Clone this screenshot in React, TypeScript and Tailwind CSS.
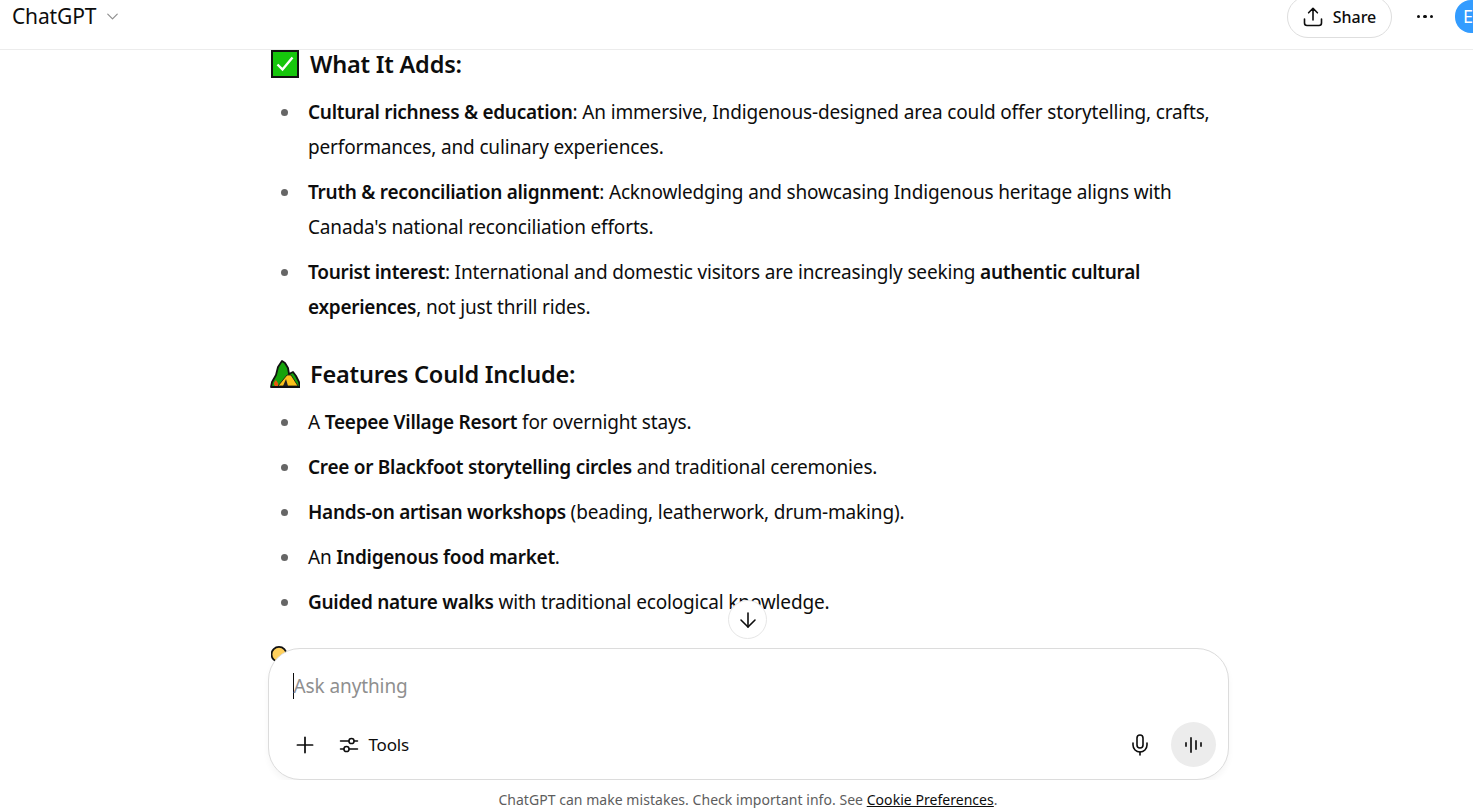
import { ArrowDown, ChevronDown, Mic, Plus } from "lucide-react";
import type { ReactNode } from "react";

const CheckEmoji = () => (
  <svg width="28" height="28" viewBox="0 0 28 28" className="shrink-0">
    <rect x="1" y="1" width="26" height="26" fill="#16c60c" stroke="#111" strokeWidth="2" />
    <path d="M6.5 14.5l5 5 10-12" fill="none" stroke="#fff" strokeWidth="2.4" />
  </svg>
);

const CampEmoji = () => (
  <svg width="30" height="28" viewBox="0 0 30 28" className="ml-[-1px] mr-[-1px] shrink-0">
    <path d="M1 27l1-5 4-7 2-8 4-6 3 2 3 5 1 6 4-2 3 4 3 6 1 5z" fill="#16a30c" stroke="#111" strokeWidth="1.8" strokeLinejoin="round" />
    <path d="M8 26l9-11h4l7 11z" fill="#fcc21b" stroke="#111" strokeWidth="0.8" strokeLinejoin="round" />
    <path d="M13 26l3-7 2 7z" fill="#222" />
    <path d="M5 26c-2-2-1-4 1-6 1 2 3 3 2 6z" fill="#e8590c" />
  </svg>
);

const BulbEmoji = () => (
  <svg width="28" height="28" viewBox="0 0 28 28" className="shrink-0">
    <circle cx="8" cy="8.4" r="7.5" fill="#ffd05c" stroke="#111" strokeWidth="1.8" />
  </svg>
);

const Heading = ({ icon, children, className }: { icon: ReactNode; children: ReactNode; className: string }) => (
  <h3 className={`flex items-center gap-[11px] h-[28px] text-[23.5px] tracking-[-0.2px] font-semibold ${className}`}>
    {icon}
    <span className="pt-[2px]">{children}</span>
  </h3>
);

const Item = ({ children }: { children: ReactNode }) => (
  <li className="relative before:absolute before:left-[-27px] before:top-[14px] before:h-[7px] before:w-[7px] before:rounded-full before:bg-[#666]">
    {children}
  </li>
);

const Bold = ({ children }: { children: ReactNode }) => <b className="font-semibold tracking-[-0.28px]">{children}</b>;

const listClass = "pl-[37px] mt-[16.5px] flex flex-col gap-[10px] text-[19px] leading-[35px] tracking-[-0.16px]";

export default function App() {
  return (
    <div className="h-[808px] w-[1473px] overflow-hidden bg-white text-[#0d0d0d] font-['Noto_Sans','Open_Sans',sans-serif]">
      <div className="relative flex h-full w-[1496px] flex-col">
        <header className="flex h-[50px] shrink-0 items-center justify-between border-b border-[#ececec] pb-[16px] pl-[12px] pr-[9px]">
          <div className="flex items-center gap-[7px]">
            <span className="text-[21px] tracking-[-0.15px]">ChatGPT</span>
            <ChevronDown size={19} strokeWidth={1.5} className="text-[#8f8f8f]" />
          </div>
          <div className="flex items-center">
            <button className="flex h-[42px] w-[105px] items-center justify-center gap-[10px] rounded-full border border-[#dedede] text-[16px] font-medium">
              <svg width="20" height="21" viewBox="0 0 20 21" fill="none" stroke="#0d0d0d" strokeWidth="1.6" strokeLinecap="round" strokeLinejoin="round">
                <path d="M10 14V2.5M5.6 6.8L10 2.3l4.4 4.5M1.5 13v4a2.5 2.5 0 0 0 2.5 2.5h12a2.5 2.5 0 0 0 2.5-2.5v-4" />
              </svg>
              Share
            </button>
            <div className="ml-[23px] flex w-[20px] justify-center gap-[3px]">
              <i className="h-[3.5px] w-[3.5px] rounded-full bg-[#0d0d0d]" />
              <i className="h-[3.5px] w-[3.5px] rounded-full bg-[#0d0d0d]" />
              <i className="h-[3.5px] w-[3.5px] rounded-full bg-[#0d0d0d]" />
            </div>
            <div className="ml-[20px] flex h-[33px] w-[32px] items-center rounded-full bg-[#339cff] pl-[8px] text-[18px] text-white">
              E
            </div>
          </div>
        </header>

        <main className="mx-auto w-[960px] flex-1 overflow-hidden px-[3px]">
          <Heading icon={<CheckEmoji />} className="mt-0">What It Adds:</Heading>
          <ul className={listClass}>
            <Item><Bold>Cultural richness &amp; education</Bold>: An immersive, Indigenous-designed area could offer storytelling, crafts, performances, and culinary experiences.</Item>
            <Item><Bold>Truth &amp; reconciliation alignment</Bold>: Acknowledging and showcasing Indigenous heritage aligns with Canada's national reconciliation efforts.</Item>
            <Item><Bold>Tourist interest</Bold>: International and domestic visitors are increasingly seeking <Bold>authentic cultural experiences</Bold>, not just thrill rides.</Item>
          </ul>
          <Heading icon={<CampEmoji />} className="mt-[35.5px]">Features Could Include:</Heading>
          <ul className={listClass}>
            <Item>A <Bold>Teepee Village Resort</Bold> for overnight stays.</Item>
            <Item><Bold>Cree or Blackfoot storytelling circles</Bold> and traditional ceremonies.</Item>
            <Item><Bold>Hands-on artisan workshops</Bold> (beading, leatherwork, drum-making).</Item>
            <Item>An <Bold>Indigenous food market</Bold>.</Item>
            <Item><Bold>Guided nature walks</Bold> with traditional ecological knowledge.</Item>
          </ul>
          <Heading icon={<BulbEmoji />} className="mt-[26.5px]">Why It Matters:</Heading>
        </main>

        <button className="absolute left-[728px] top-[600px] flex h-[39px] w-[39px] items-center justify-center rounded-full border border-[#e6e6e6] bg-white">
          <ArrowDown size={24} strokeWidth={1.6} />
        </button>

        <div className="absolute bottom-0 left-0 right-0 flex flex-col items-center">
          <div className="flex h-[132px] w-[961px] flex-col justify-between rounded-[32px] border border-[#dcdcdc] bg-white pb-[12px] pl-[23px] pr-[12px] pt-[23px] shadow-[0_4px_6px_rgba(0,0,0,0.04)]">
            <div className="ml-[1px] flex h-[28px] items-center text-[19px] tracking-[-0.1px] text-[#8f8f8f]">
              <i className="h-[26px] w-px bg-[#0d0d0d]" />
              <span>Ask anything</span>
            </div>
            <div className="flex items-center justify-between">
              <div className="flex items-center">
                <Plus size={26} strokeWidth={1.6} />
                <svg width="20" height="20" viewBox="0 0 20 20" fill="none" stroke="#0d0d0d" strokeWidth="1.5" strokeLinecap="round" className="ml-[21px]">
                  <path d="M1.5 6h8.5M15 6h3.5M1.5 14h3.5M10 14h8.5" />
                  <circle cx="12.5" cy="6" r="2.6" />
                  <circle cx="7.5" cy="14" r="2.6" />
                </svg>
                <span className="ml-[10px] text-[17px] tracking-[-0.2px]">Tools</span>
              </div>
              <div className="flex items-center gap-[19px]">
                <Mic size={24} strokeWidth={1.6} />
                <div className="flex h-[45px] w-[45px] items-center justify-center gap-[3px] rounded-full bg-[#ececec]">
                  <i className="h-[5px] w-[2px] rounded-full bg-[#333]" />
                  <i className="h-[16px] w-[2px] rounded-full bg-[#333]" />
                  <i className="h-[10px] w-[2px] rounded-full bg-[#333]" />
                  <i className="h-[5px] w-[2px] rounded-full bg-[#333]" />
                </div>
              </div>
            </div>
          </div>
          <p className="flex h-[28px] w-full items-center justify-center bg-white pt-[12px] text-[14px] leading-none tracking-[0.04px] text-[#5d5d5d]">
            ChatGPT can make mistakes. Check important info. See&nbsp;<u className="text-[#0d0d0d]">Cookie Preferences</u>.
          </p>
        </div>
      </div>
    </div>
  );
}
